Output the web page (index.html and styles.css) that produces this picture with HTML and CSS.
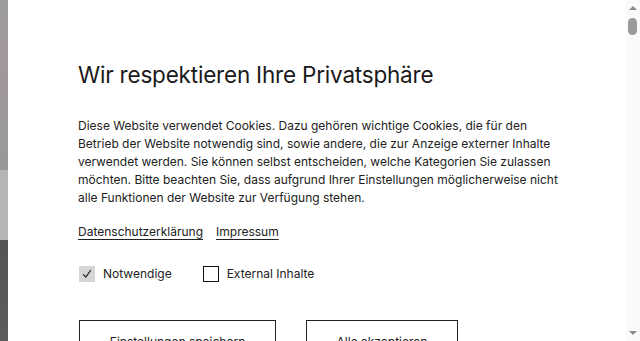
FILE: index.html
```html
<!DOCTYPE html>
<html lang="de">
<head>
<meta charset="utf-8">
<title>Privatsphäre</title>
<link rel="stylesheet" href="styles.css">
</head>
<body>
<div class="backdrop">
  <div class="bg-strip">
    <div class="bg-top"></div>
    <div class="bg-mid"></div>
    <div class="bg-bottom"></div>
  </div>
  <div class="modal">
    <div class="content">
      <h1 class="title">Wir respektieren Ihre Privatsphäre</h1>
      <p class="text">Diese Website verwendet Cookies. Dazu gehören wichtige Cookies, die für den Betrieb der Website notwendig sind, sowie andere, die zur Anzeige externer Inhalte verwendet werden. Sie können selbst entscheiden, welche Kategorien Sie zulassen möchten. Bitte beachten Sie, dass aufgrund Ihrer Einstellungen möglicherweise nicht alle Funktionen der Website zur Verfügung stehen.</p>
      <div class="links">
        <a class="link" href="#">Datenschutzerklärung</a>
        <a class="link" href="#">Impressum</a>
      </div>
      <div class="options">
        <label class="option">
          <span class="box box-checked">
            <svg width="12" height="12" viewBox="0 0 12 12"><path d="M2.2 6.4 L4.8 9 L9.8 2.2" fill="none" stroke="#222" stroke-width="1.2"/></svg>
          </span>
          <span class="option-label">Notwendige</span>
        </label>
        <label class="option option-ext">
          <span class="box"></span>
          <span class="option-label">External Inhalte</span>
        </label>
      </div>
      <div class="buttons">
        <button class="btn btn-save">Einstellungen speichern</button>
        <button class="btn btn-all">Alle akzeptieren</button>
      </div>
    </div>
    <div class="scrollbar">
      <span class="arrow arrow-up"></span>
      <span class="thumb"></span>
      <span class="arrow arrow-down"></span>
    </div>
  </div>
</div>
</body>
</html>
```
FILE: styles.css
```css
html, body {
  margin: 0;
  padding: 0;
  height: 100%;
  overflow: hidden;
}
body {
  font-family: Inter, "Liberation Sans", sans-serif;
  color: #222;
}
.backdrop {
  display: flex;
  height: 341px;
}
.bg-strip {
  width: 8px;
  display: flex;
  flex-direction: column;
  flex-shrink: 0;
}
.bg-top {
  height: 170px;
  background: linear-gradient(180deg, #9c9c9c 0%, #a19a9c 20%, #a0979a 50%, #9b9a9a 75%, #999898 100%);
}
.bg-mid {
  height: 70px;
  background: #b6b6b6;
}
.bg-bottom {
  flex: 1;
  background: linear-gradient(180deg, #545454, #5c5c5c);
}
.modal {
  flex: 1;
  background: #fff;
  overflow: hidden;
  height: 341px;
  position: relative;
}
.content {
  padding: 59px 70px 60px 70px;
}
.title {
  margin: 0;
  font-size: 22.5px;
  font-weight: 400;
  line-height: 32px;
  color: #1a1a1a;
  letter-spacing: -0.2px;
}
.text {
  margin: 26px 0 0 0;
  font-size: 12px;
  line-height: 18px;
  max-width: 492px;
  color: #222;
}
.links {
  display: flex;
  gap: 13px;
  margin-top: 16px;
}
.link {
  font-size: 12px;
  line-height: 18px;
  color: #222;
  text-decoration: underline;
  text-underline-offset: 3px;
}
.options {
  display: flex;
  gap: 30px;
  margin-top: 24px;
}
.option {
  display: flex;
  align-items: center;
  gap: 8px;
  font-size: 12px;
  line-height: 18px;
}
.box {
  width: 14px;
  height: 14px;
  border: 1.5px solid #111;
  display: flex;
  align-items: center;
  justify-content: center;
  margin-left: 1px;
}
.box-checked {
  border-color: #d6d6d6;
  background: #d6d6d6;
}
.buttons {
  display: flex;
  gap: 29px;
  margin-top: 37px;
}
.btn {
  font-family: inherit;
  font-size: 12px;
  color: #222;
  background: #fff;
  border: 1px solid #222;
  height: 42px;
  padding: 0 10px;
  margin-left: 1px;
  white-space: nowrap;
}
.btn-save {
  width: 197px;
}
.btn-all {
  width: 152px;
}
.scrollbar {
  position: absolute;
  top: 0;
  right: 0;
  width: 14px;
  height: 341px;
  background: #fafafa;
}
.arrow {
  position: absolute;
  left: 3px;
  width: 0;
  height: 0;
  border-left: 4px solid transparent;
  border-right: 4px solid transparent;
}
.arrow-up {
  top: 6px;
  border-bottom: 4px solid #8a8a8a;
}
.arrow-down {
  bottom: 6px;
  border-top: 4px solid #8a8a8a;
}
.thumb {
  position: absolute;
  top: 18px;
  left: 2px;
  width: 9px;
  height: 17px;
  border-radius: 5px;
  background: #9a9a9a;
}
```
